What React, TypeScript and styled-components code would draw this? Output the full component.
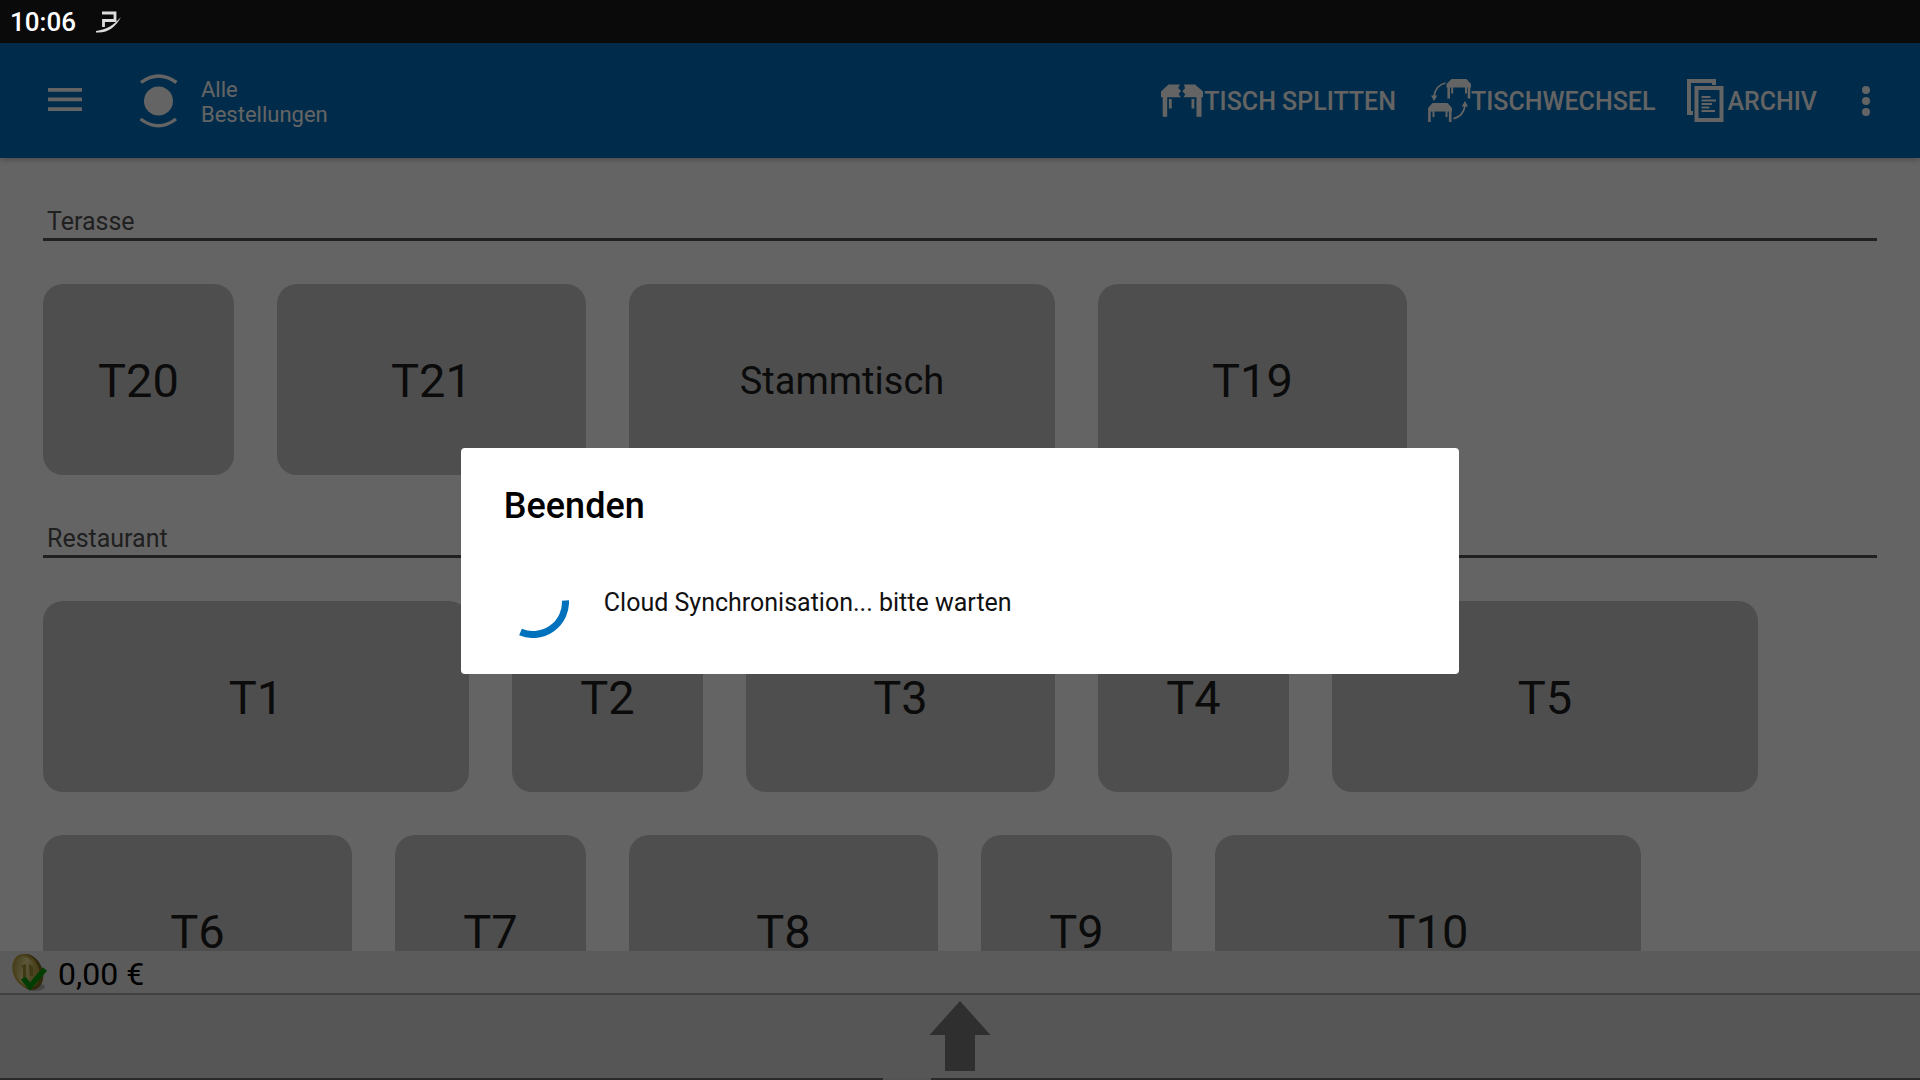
import React from "react";
import styled, { createGlobalStyle } from "styled-components";

const Global = createGlobalStyle`
  *, *::before, *::after { box-sizing: border-box; }
  body { margin: 0; background: #fafafa; font-family: Roboto, "Liberation Sans", sans-serif; }
  button { font: inherit; color: inherit; border: 0; background: none; padding: 0; }
  h1, h2, p { margin: 0; font-weight: 400; }
`;

const Screen = styled.div`
  display: flex;
  flex-direction: column;
  height: 100vh;
  overflow: hidden;
`;

const StatusBar = styled.div`
  position: relative;
  z-index: 2;
  flex: none;
  display: flex;
  align-items: center;
  gap: 20px;
  height: 43px;
  padding: 1px 10px 0;
  background: #0a0a0a;
  color: #fff;
  font-size: 26px;
  font-weight: 500;
  line-height: 30px;
`;

const AppBar = styled.header`
  flex: none;
  display: flex;
  align-items: center;
  height: 115px;
  padding: 0 49px 0 48px;
  background: #006db8;
  color: #fafafa;
  box-shadow: 0 1px 6px rgba(0, 0, 0, 0.3);
  z-index: 1;
`;

const IconButton = styled.button`
  display: flex;
`;

const Brand = styled.div`
  display: flex;
  align-items: center;
  gap: 23px;
  margin-left: 57px;
`;

const BrandName = styled.h1`
  width: min-content;
  padding-top: 2px;
  font-size: 22px;
  line-height: 25px;
`;

const Actions = styled.nav`
  display: flex;
  align-items: center;
  gap: 44px;
  margin-left: auto;
`;

const ActionGroup = styled.div`
  display: flex;
  gap: 32px;
`;

const Action = styled.button`
  display: flex;
  align-items: center;
  font-size: 25px;
  font-weight: 500;
  line-height: 30px;
`;

const ActionLabel = styled.span`
  padding-top: 3px;
`;

const Content = styled.main`
  flex: 1;
  min-height: 0;
  overflow: hidden;
  padding: 0 43px;
`;

const SectionTitle = styled.h2`
  margin: 43px 0;
  padding: 5px 4px 1px;
  border-bottom: 3px solid #505050;
  color: #505050;
  font-size: 25px;
  line-height: 31px;
`;

const Tables = styled.div`
  display: flex;
  flex-wrap: wrap;
  gap: 43px;
`;

const sizes = { small: 191, medium: 309, large: 426 };

const Table = styled.button<{ $size: keyof typeof sizes; $long?: boolean }>`
  width: ${(p) => sizes[p.$size]}px;
  height: 191px;
  padding-top: 2px;
  border-radius: 20px;
  background: #c3c3c3;
  color: #1c1c1c;
  font-size: ${(p) => (p.$long ? 38 : 47)}px;
`;

const TotalBar = styled.div`
  flex: none;
  display: flex;
  align-items: center;
  gap: 10px;
  height: 42px;
  padding: 0 10px;
  background: #e4e4e4;
  color: #000;
  font-size: 32px;
`;

const Total = styled.span`
  padding-top: 4px;
  line-height: 38px;
`;

const Drawer = styled.footer`
  flex: none;
  display: flex;
  flex-direction: column;
  align-items: center;
  justify-content: space-between;
  height: 87px;
  padding-top: 6px;
  border-top: 2px solid #a4a4a4;
  background: #d6d6d6;
`;

const Edge = styled.div`
  display: flex;
  align-self: stretch;
  justify-content: center;
  padding-right: 106px;
  height: 2px;
  background: #6a6a6a;
`;

const Grip = styled.div`
  width: 48px;
  background: #d0d0d0;
`;

const Scrim = styled.div`
  position: fixed;
  inset: 0;
  z-index: 1;
  display: flex;
  align-items: center;
  justify-content: center;
  padding-top: 42px;
  background: rgba(0, 0, 0, 0.6);
`;

const Dialog = styled.section`
  width: 52%;
  padding: 36px 36px 0;
  height: 226px;
  border-radius: 4px;
  background: #fff;
  color: #000;
`;

const DialogTitle = styled.h2`
  padding-left: 7px;
  font-size: 36px;
  font-weight: 500;
  line-height: 44px;
`;

const Progress = styled.div`
  display: flex;
  gap: 35px;
  margin-top: 38px;
`;

const Message = styled.p`
  padding-top: 22px;
  font-size: 25px;
  line-height: 30px;
  color: #111;
`;

const NoteIcon = () => (
  <svg width="26" height="22" viewBox="0 0 26 22" fill="none">
    <path d="M6 2h13v7.500H7.500v6.500" stroke="#ddd" strokeWidth="2.800" />
    <path d="M0 20C11 18.500 18 14 25 6 20 15.500 12 22.500 0 21.500z" fill="#ddd" />
  </svg>
);

const MenuIcon = () => (
  <svg width="34" height="26" viewBox="0 0 34 26" fill="currentColor">
    <path d="M0 0h34v3.700H0zM0 9.500h34v3.700H0zM0 19.200h34v3.700H0z" />
  </svg>
);

const LogoIcon = () => (
  <svg width="39" height="54" viewBox="0 0 39 54" fill="none" stroke="currentColor" strokeWidth="3.400">
    <circle cx="19.500" cy="27" r="14.500" fill="currentColor" stroke="none" />
    <path d="M2 8.500Q19.500-4.500 37.500 8.500M1.500 45Q19.500 58.500 37 45" />
  </svg>
);

const SplitIcon = () => (
  <svg width="43" height="43" viewBox="0 0 43 43" fill="currentColor">
    <path d="M7.500 5.500H19l-1.800 3.500 2.800 3-2.500 3 2.500 3.300H6.200v19.400H1.700V18.300H0V12.500zM23 5.500H34l8 7v5.800h-1.500v19.400h-5V18.300H22.500l1.800-3-3-3 2.700-3z" />
    <path d="M7.900 20h2.800v9.500H7.900zM30.500 20h2.800v9.500h-2.800z" />
  </svg>
);

const SwapIcon = () => (
  <svg width="43" height="43" viewBox="0 0 43 43" fill="currentColor">
    <path d="M23.500 0H38.500L43 5v3.500h-.7v11h-2.600V8.500H22v11h-2.600V8.500H18.500V5zM4.500 24H19.500l4.500 5v3.500h-.5V43h-2.600V32.500H2.700V43H.100V29z" />
    <path d="M23.200 8h2v6.500h-2zM37 8h2v6.500h-2zM4.500 32h2v6h-2zM17.500 32h2v6h-2zM3 16.500h6.300L6 22zM33.700 27.500h6.300L37 22z" />
    <path d="M17.500 4Q8 6 6 17M25.500 39.600Q35 37.500 37 27" fill="none" stroke="currentColor" strokeWidth="1.700" />
  </svg>
);

const ArchiveIcon = () => (
  <svg width="40" height="43" viewBox="0 0 40 43" fill="none" stroke="currentColor" strokeWidth="4">
    <path d="M27 6V2H2v32h4" />
    <path d="M9.500 9h25v32h-25z" />
    <path d="M14.500 18h9M14.500 21.500h14.500M14.500 25h10.500M14.500 28.500h8M14.500 32h13.500" strokeWidth="2.200" />
  </svg>
);

const MoreIcon = () => (
  <svg width="10" height="30" viewBox="0 0 10 30" fill="currentColor">
    <circle cx="5" cy="4" r="4" />
    <circle cx="5" cy="15" r="4" />
    <circle cx="5" cy="26" r="4" />
  </svg>
);

const CoinIcon = () => (
  <svg width="38" height="40" viewBox="0 0 38 40">
    <defs>
      <linearGradient id="coin" x1="0" y1="0" x2="1" y2="1">
        <stop offset="0" stopColor="#a08a38" />
        <stop offset="0.450" stopColor="#e4d890" />
        <stop offset="1" stopColor="#9a8220" />
      </linearGradient>
    </defs>
    <ellipse cx="25" cy="35" rx="10" ry="4" fill="#b0b0b0" />
    <ellipse cx="19" cy="20" rx="13.500" ry="18.500" transform="rotate(-22 19 20)" fill="#7c6620" />
    <ellipse cx="16" cy="19" rx="13" ry="17.500" transform="rotate(-22 16 19)" fill="#b8a040" />
    <ellipse cx="16" cy="19" rx="10.500" ry="15" transform="rotate(-22 16 19)" fill="url(#coin)" />
    <path d="M11 14l5-2v12l-3 2V16zM19 12l4 3v9h-3z" fill="#a08a30" />
    <path d="M13 26l7 8.500L35 17" fill="none" stroke="#0a9a0a" strokeWidth="5.500" />
  </svg>
);

const ArrowIcon = () => (
  <svg width="62" height="70" viewBox="0 0 62 70" fill="#767676">
    <path d="M31 0l30.500 34H46v36H16V34H.5z" />
  </svg>
);

const Spinner = () => (
  <svg width="72" height="72" viewBox="0 0 72 72" fill="none" stroke="#0071bc" strokeWidth="7">
    <path d="M68.500 34.500A32.500 32.500 0 0 1 23.500 66" />
  </svg>
);

type TableInfo = { name: string; size: keyof typeof sizes };

const areas: { name: string; tables: TableInfo[] }[] = [
  {
    name: "Terasse",
    tables: [
      { name: "T20", size: "small" },
      { name: "T21", size: "medium" },
      { name: "Stammtisch", size: "large" },
      { name: "T19", size: "medium" },
    ],
  },
  {
    name: "Restaurant",
    tables: [
      { name: "T1", size: "large" },
      { name: "T2", size: "small" },
      { name: "T3", size: "medium" },
      { name: "T4", size: "small" },
      { name: "T5", size: "large" },
      { name: "T6", size: "medium" },
      { name: "T7", size: "small" },
      { name: "T8", size: "medium" },
      { name: "T9", size: "small" },
      { name: "T10", size: "large" },
    ],
  },
];

export default function App() {
  return (
    <Screen>
      <Global />
      <StatusBar>
        <span>10:06</span>
        <NoteIcon />
      </StatusBar>
      <AppBar>
        <IconButton aria-label="Menü"><MenuIcon /></IconButton>
        <Brand>
          <LogoIcon />
          <BrandName>Alle Bestellungen</BrandName>
        </Brand>
        <Actions>
          <ActionGroup>
            <Action><SplitIcon /><ActionLabel>TISCH SPLITTEN</ActionLabel></Action>
            <Action><SwapIcon /><ActionLabel>TISCHWECHSEL</ActionLabel></Action>
            <Action><ArchiveIcon /><ActionLabel>ARCHIV</ActionLabel></Action>
          </ActionGroup>
          <IconButton aria-label="Mehr"><MoreIcon /></IconButton>
        </Actions>
      </AppBar>
      <Content>
        {areas.map((area) => (
          <section key={area.name}>
            <SectionTitle>{area.name}</SectionTitle>
            <Tables>
              {area.tables.map((t) => (
                <Table key={t.name} $size={t.size} $long={t.name.length > 4}>{t.name}</Table>
              ))}
            </Tables>
          </section>
        ))}
      </Content>
      <TotalBar>
        <CoinIcon />
        <Total>0,00 €</Total>
      </TotalBar>
      <Drawer>
        <IconButton aria-label="Öffnen"><ArrowIcon /></IconButton>
        <Edge><Grip /></Edge>
      </Drawer>
      <Scrim>
        <Dialog role="dialog" aria-modal="true" aria-labelledby="dialog-title">
          <DialogTitle id="dialog-title">Beenden</DialogTitle>
          <Progress>
            <Spinner />
            <Message>Cloud Synchronisation... bitte warten</Message>
          </Progress>
        </Dialog>
      </Scrim>
    </Screen>
  );
}
